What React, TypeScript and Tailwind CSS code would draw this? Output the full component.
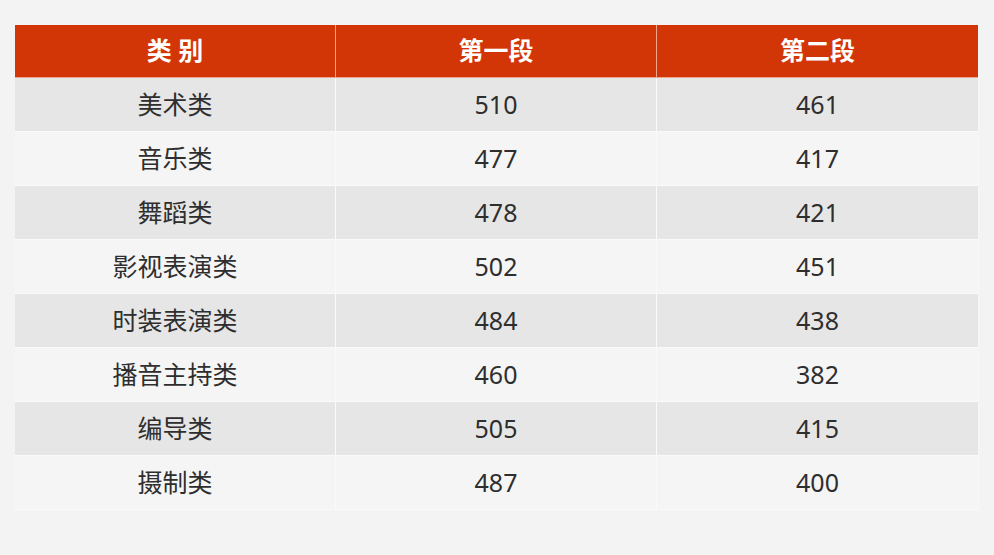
import React from 'react';

const rows = [
  ['美术类', '510', '461'],
  ['音乐类', '477', '417'],
  ['舞蹈类', '478', '421'],
  ['影视表演类', '502', '451'],
  ['时装表演类', '484', '438'],
  ['播音主持类', '460', '382'],
  ['编导类', '505', '415'],
  ['摄制类', '487', '400'],
];

const font = { fontFamily: '"Noto Sans", "Noto Sans CJK SC", sans-serif' };

const App = () => {
  return (
    <div className="min-h-screen w-full bg-[#f3f3f3] pt-[25px] px-[15px]" style={font}>
      <div className="w-[964px] border-r border-[#f8f8f8]">
        <div className="grid grid-cols-3 h-[53px] bg-[#d33606] text-white text-[25px] font-bold">
          <div className="flex items-center justify-center border-r border-b border-[#eea58c]">类 别</div>
          <div className="flex items-center justify-center border-r border-b border-[#eea58c]">第一段</div>
          <div className="flex items-center justify-center border-b border-[#eea58c]">第二段</div>
        </div>
        {rows.map((r, i) => (
          <div
            key={r[0]}
            className={`grid grid-cols-3 h-[54px] text-[25px] text-[#2e2e2e] ${i % 2 === 0 ? 'bg-[#e6e6e6]' : 'bg-[#f5f5f5]'}`}
          >
            {r.map((c, j) => (
              <div
                key={j}
                className={`flex items-center justify-center border-b border-[#fafafa] ${j < 2 ? 'border-r' : ''}`}
              >
                {c}
              </div>
            ))}
          </div>
        ))}
      </div>
    </div>
  );
};

export default App;
